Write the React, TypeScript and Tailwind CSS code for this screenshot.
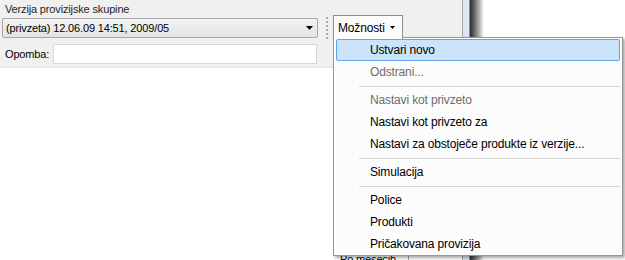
const items: { label: string; disabled?: boolean; active?: boolean; sep?: boolean }[] = [
  { label: "Ustvari novo", active: true },
  { label: "Odstrani...", disabled: true },
  { label: "", sep: true },
  { label: "Nastavi kot privzeto", disabled: true },
  { label: "Nastavi kot privzeto za" },
  { label: "Nastavi za obstoječe produkte iz verzije..." },
  { label: "", sep: true },
  { label: "Simulacija" },
  { label: "", sep: true },
  { label: "Police" },
  { label: "Produkti" },
  { label: "Pričakovana provizija" },
];

const Grip = () => (
  <div className="flex flex-col gap-[2px]">
    {[0, 1, 2, 3, 4, 5].map((i) => (
      <div key={i} className="w-[2px] h-[2px] bg-[#a9a9a9]" />
    ))}
  </div>
);

const OptionsMenu = () => (
  <div className="absolute left-[333px] top-[37px] w-[290px] h-[219px] border border-[#979797] bg-[#fcfcfc] px-[2px] pt-[1px] shadow-[2px_2px_3px_rgba(0,0,0,0.35)] z-10 text-[12px] tracking-[-0.15px]">
    {items.map((it, i) =>
      it.sep ? (
        <div key={i} className="h-[6px] flex items-center pl-[23px]">
          <div className="h-px w-full bg-[#d7d7d7]" />
        </div>
      ) : (
        <div
          key={i}
          className={
            "h-[22px] flex items-center pl-[33px] rounded-[2px] border " +
            (it.active ? "bg-[#cce4f9] border-[#5ea5ea]" : "border-transparent") +
            (it.disabled ? " text-[#6d6d6d]" : " text-black")
          }
        >
          {it.label}
        </div>
      )
    )}
  </div>
);

export default function App() {
  return (
    <div className="relative w-[625px] h-[260px] overflow-hidden bg-white text-[11px] tracking-[-0.15px] leading-none font-['Liberation_Sans',Arial,sans-serif]">
      <div className="flex flex-row h-full">
        <div className="w-[462px] flex flex-col">
          <div className="h-[68px] bg-[#f0f0f0] border-b border-[#e6e6e6] pt-[4px]">
            <p className="pl-[5px] text-[#1e1e1e] h-[12px]">Verzija provizijske skupine</p>
            <div className="flex flex-row items-center mt-[1px]">
              <div className="ml-[2px] w-[316px] h-[20px] border border-[#a7a7a7] rounded-[2px] bg-gradient-to-b from-[#f3f3f3] to-[#e3e3e3] flex items-center justify-between pl-[3px] pr-[4px]">
                <span>(privzeta) 12.06.09 14:51, 2009/05</span>
                <svg width="7" height="4" viewBox="0 0 7 4">
                  <path d="M0 0h7L3.5 4z" fill="#000" />
                </svg>
              </div>
              <div className="ml-[8px]">
                <Grip />
              </div>
            </div>
            <div className="flex flex-row items-center mt-[5px]">
              <span className="pl-[5px] w-[53px]">Opomba:</span>
              <div className="w-[264px] h-[20px] bg-white border border-[#d9d9d9]" />
            </div>
          </div>
          <div className="flex-1" />
          <div className="h-[6px] flex flex-row">
            <span className="ml-[340px] text-black">Po mesecih</span>
            <div className="ml-auto mr-[53px] w-px bg-[#a0a0a0]" />
          </div>
        </div>
        <div className="w-[1px] bg-[#a5a5a5]" />
        <div className="w-[6px] bg-[#dce8f6]" />
        <div className="w-[1px] bg-[#8e8e8e]" />
        <div className="w-[14px] bg-gradient-to-r from-[#2e2e2e] to-white" />
      </div>

      <div className="absolute left-[333px] top-[15px] w-[70px] h-[24px] bg-[#fcfcfc] border border-b-0 border-[#8f8f8f] flex items-center pl-[4px] gap-[5px] z-20 text-[12px] tracking-[-0.15px]">
        <span>Možnosti</span>
        <svg width="5" height="3" viewBox="0 0 5 3">
          <path d="M0 0h5L2.5 3z" fill="#000" />
        </svg>
      </div>

      <OptionsMenu />
    </div>
  );
}
